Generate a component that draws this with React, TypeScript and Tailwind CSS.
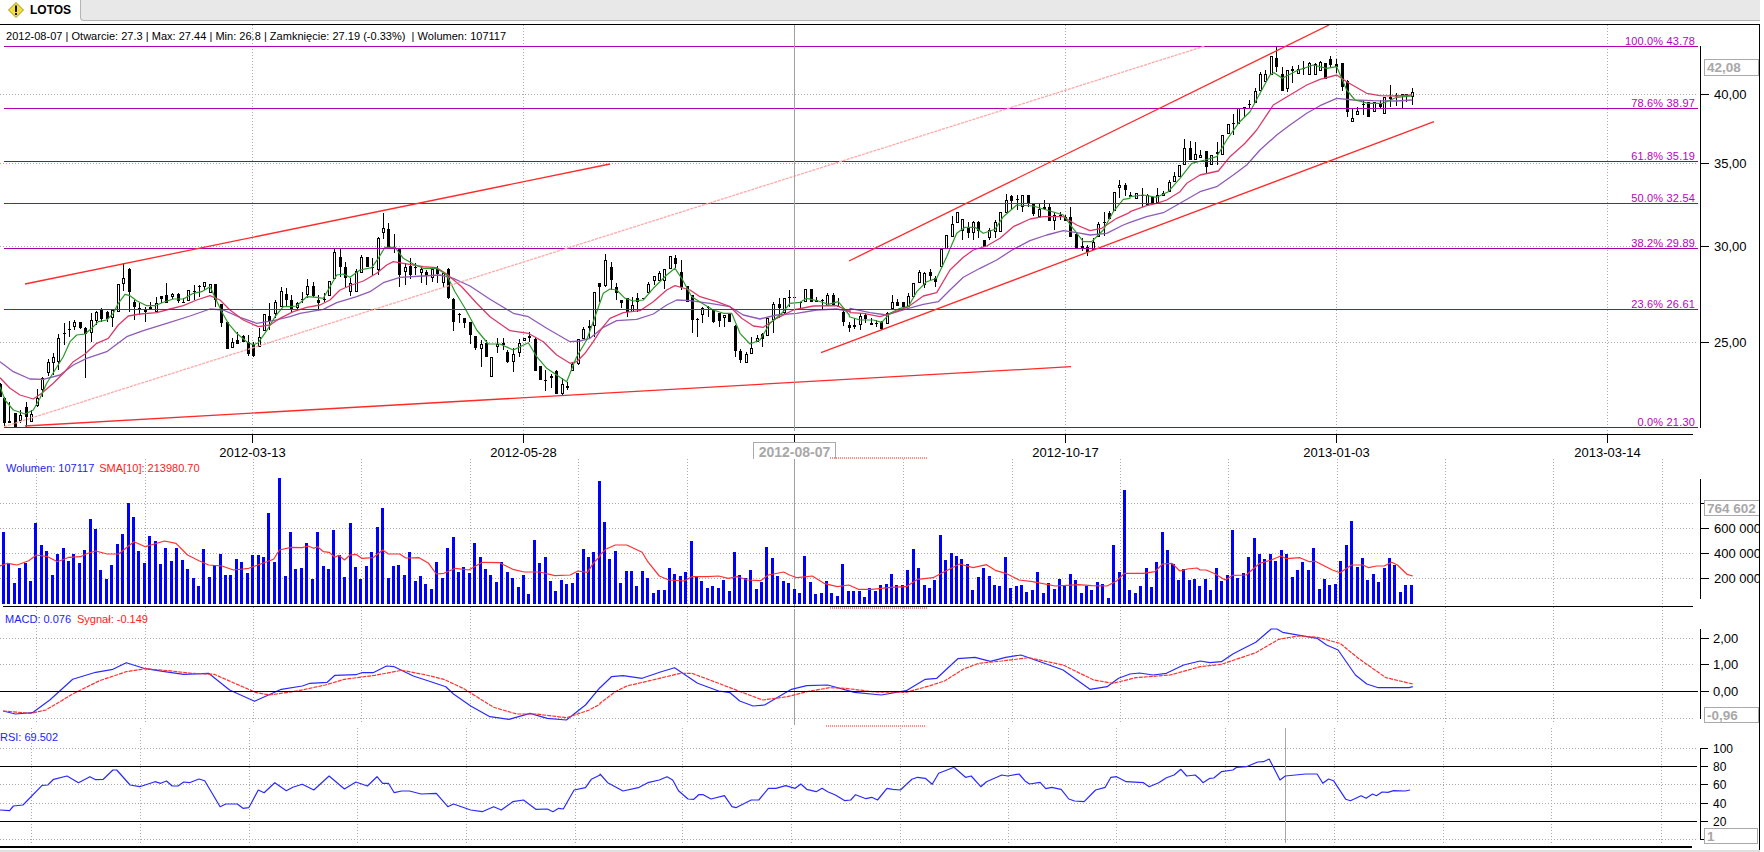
import React from 'react';

const seg = (cx: number, cy: number, sx: number, sy: number, s: string) =>
  s.trim().split(/\s+/).map((p) => {
    const [x, y] = p.split(',').map(Number);
    return `${(cx + x / sx).toFixed(1)},${(cy + y / sy).toFixed(1)}`;
  }).join(' ');

const Z = 2.613; // horizontal scale of the wide crops the points were read from

// hi, body top, body bottom, lo, filled - read from the crops, grouped per crop
type C = [number, number, number, number, number, number];
const candleParts: { cx: number; cy: number; d: C[] }[] = [
  { cx: 0, cy: 210, d: [
    [0,520,522,560,560,1],[13,562,565,640,650,1],[28,575,634,638,638,1],[45,608,608,650,650,1],[61,600,615,632,640,0],[78,575,590,620,650,1],
    [94,600,612,635,635,0],[110,538,565,587,590,0],[127,500,503,540,560,0],[143,448,455,490,498,0],[160,430,442,458,495,0],[175,372,385,455,480,0],
    [192,338,369,371,405,1],[208,333,357,361,380,1],[223,330,335,350,360,0],[241,335,337,355,358,1],[256,350,355,372,503,1],[274,310,331,368,395,0],
    [289,302,305,332,345,0],[304,295,300,327,335,1],[322,303,305,328,335,1],[337,297,300,325,352,0],[354,222,222,305,305,0],[370,160,205,223,243,0],
    [388,175,177,245,305,1],[403,270,277,290,330,1],[418,280,295,301,315,1],[436,290,300,305,335,1],[451,275,292,297,300,0],[469,262,280,305,307,0],
    [484,258,259,266,278,1],[499,220,256,280,280,1],[517,250,251,260,268,0],[533,250,251,272,280,1],[550,265,276,277,280,1],[565,240,241,272,272,0],
    [581,225,243,247,270,1],[598,226,227,231,260,1],[613,215,217,232,240,0],[631,222,222,248,248,0],[646,222,222,270,290,1],[664,282,283,338,350,1],
    [680,336,336,416,416,1],[695,385,397,414,414,0],[712,365,391,401,401,1],[728,375,377,396,396,1],[745,375,397,433,437,1],[760,397,405,438,440,1],
    [776,355,380,412,412,0],[793,313,313,362,362,0],[808,280,318,333,360,1],[826,270,277,312,325,0],[842,232,244,290,290,0],[859,235,252,270,290,1],
  ] },
  { cx: 280, cy: 200, d: [
    [34,285,300,326,340,1],[50,305,308,325,330,0],[67,275,296,298,310,1],[82,238,259,285,295,0],[100,245,259,287,290,1],[115,285,300,308,328,1],
    [132,278,296,297,305,1],[148,244,244,287,287,0],[163,148,156,238,238,0],[181,147,171,200,230,1],[196,185,201,233,260,1],[211,235,250,277,288,0],
    [229,208,214,276,276,0],[244,165,171,220,220,0],[262,171,171,201,201,1],[277,175,200,203,228,1],[295,112,114,210,225,0],[310,40,85,99,118,0],
    [325,70,88,140,140,1],[343,102,140,143,160,1],[358,145,147,225,260,1],[376,190,202,215,255,0],[391,175,198,224,238,1],[406,190,200,203,225,1],
    [424,200,208,218,250,0],[439,210,217,229,255,1],[457,200,208,235,245,0],[472,197,208,222,248,1],[488,220,220,248,260,0],[505,205,208,295,298,1],
    [520,295,296,365,392,1],[538,338,342,345,370,1],[553,355,355,370,385,1],[571,367,367,404,433,1],[586,408,408,445,450,1],[602,420,433,448,500,0],
    [619,420,430,472,472,1],[634,470,470,532,532,0],[652,415,433,442,460,0],[668,415,430,435,450,1],[682,450,455,485,490,1],[700,445,462,485,515,0],
    [716,418,430,458,470,0],[733,415,415,422,422,0],[748,397,408,413,425,1],[766,410,418,512,512,1],[781,497,497,541,541,1],[796,510,540,542,572,1],
    [814,522,528,534,565,1],[829,510,513,583,583,1],[847,535,552,581,585,0],[862,545,559,564,570,1],
  ] },
  { cx: 560, cy: 240, d: [
    [37,365,373,393,393,0],[54,298,298,373,375,0],[70,262,268,298,298,0],[88,240,258,265,295,0],[102,156,156,258,290,0],[118,130,130,140,185,1],
    [135,42,60,137,140,0],[152,65,80,120,150,1],[169,130,142,158,180,1],[184,180,180,188,205,1],[202,175,175,215,230,1],[217,170,195,215,215,0],
    [232,160,175,187,215,1],[248,175,175,178,178,1],[265,125,132,158,158,0],[282,107,107,122,135,0],[298,92,100,122,122,0],[313,88,88,122,148,0],
    [331,47,48,87,87,0],[346,45,55,72,85,1],[364,60,97,140,150,1],[380,138,138,185,185,1],[397,165,165,240,280,1],[412,235,238,241,290,1],
    [427,200,205,225,250,0],[445,198,200,203,232,1],[460,210,210,245,250,1],[478,220,220,242,262,1],[493,225,225,235,260,0],[508,220,220,245,245,1],
    [526,255,257,332,350,1],[541,328,333,360,368,1],[558,335,343,370,370,0],[574,290,323,343,343,0],[590,285,295,305,305,0],[606,280,281,298,320,1],
    [622,235,235,288,288,0],[639,185,193,240,280,0],[656,175,193,205,235,1],[672,175,175,220,225,0],[688,150,170,172,200,1],[703,170,170,175,175,1],
    [720,185,187,190,208,1],[736,148,148,185,185,0],[754,147,147,185,185,1],[769,170,180,187,187,1],[785,178,180,183,210,1],[802,160,165,198,198,0],
    [818,160,165,195,195,1],[834,175,197,200,200,1],
  ] },
  { cx: 840, cy: 170, d: [
    [10,415,425,455,468,1],[28,455,465,475,485,1],[43,445,466,470,478,1],[59,430,438,465,480,0],[76,430,435,447,458,1],[92,445,460,464,464,1],[108,450,458,460,472,1],
    [124,453,456,478,480,1],[140,425,428,462,462,0],[157,375,396,418,418,0],[172,388,396,408,408,1],[190,396,396,412,415,1],[205,370,378,412,412,0],
    [220,338,338,382,382,0],[238,300,305,338,338,0],[253,305,308,344,355,0],[271,298,305,317,330,1],[286,318,325,335,350,1],[304,236,236,290,290,0],
    [319,196,196,238,238,0],[335,138,162,200,200,0],[352,125,127,158,158,0],[367,148,148,182,210,0],[385,155,173,188,205,1],[400,152,156,188,210,0],
    [415,152,156,182,205,1],[433,210,210,230,232,1],[448,175,179,205,210,0],[466,150,157,185,205,0],[481,127,127,185,185,0],[497,72,90,128,128,0],
    [514,75,78,92,118,1],[530,75,87,91,120,1],[547,75,76,110,125,0],[563,75,75,100,112,1],[580,100,102,133,138,1],[596,100,118,140,140,0],
    [611,90,112,118,120,1],[628,100,112,152,152,1],[643,125,135,152,180,0],[660,125,135,138,150,1],[676,135,142,152,152,1],[691,112,142,202,202,1],
    [709,190,192,238,238,1],[725,205,228,238,242,1],[742,225,230,246,258,1],[758,205,215,240,240,0],[775,155,163,200,200,0],[791,125,155,158,198,1],
    [806,122,130,147,147,1],[822,65,65,122,122,0],[838,30,45,55,85,0],[856,40,45,60,78,1],
  ] },
  { cx: 1120, cy: 40, d: [
    [15,435,436,450,465,1],[31,455,465,470,470,1],[47,460,460,478,478,0],[65,445,465,468,500,1],[81,462,465,495,498,0],[97,470,470,490,495,1],
    [112,445,465,488,488,0],[128,452,458,468,468,0],[146,420,427,455,455,0],[161,395,408,425,425,0],[177,375,375,412,412,0],[193,298,323,375,375,0],
    [211,302,323,360,360,1],[226,305,342,360,360,0],[241,330,344,355,355,0],[259,334,334,380,403,1],[274,345,346,375,375,0],[292,305,336,342,375,1],
    [307,285,285,346,346,0],[323,252,252,283,283,0],[340,222,250,253,285,1],[355,205,205,253,253,0],[373,200,202,204,230,1],[388,180,192,194,207,1],
    [406,145,153,188,188,0],[421,95,102,153,153,0],[436,90,102,127,127,0],[454,48,48,105,105,0],[469,20,55,82,95,1],[487,82,102,152,152,1],
    [502,90,90,148,155,0],[517,78,88,92,130,1],[535,75,88,103,103,0],[550,62,85,88,105,1],[568,65,70,105,105,0],[584,68,73,105,105,0],
    [599,62,67,92,92,0],[616,68,68,118,118,1],[631,48,58,75,80,1],[649,58,72,80,100,1],[665,70,70,140,153,1],[681,120,122,215,230,1],
    [697,205,235,245,245,0],[712,200,214,225,225,0],[730,180,192,195,225,1],[745,185,187,230,230,1],[763,186,186,216,216,0],[779,180,192,200,205,1],
    [793,170,172,222,222,0],[811,135,172,178,200,1],[827,158,164,168,198,1],[845,163,163,167,205,1],[859,162,163,168,185,1],[877,145,155,172,195,0],
  ] },
];

const candles = candleParts.flatMap(({ cx, cy, d }) =>
  d.map(([x, hi, top, bot, lo, f]) => ({
    x: Math.round(cx + x / 3) + 0.5,
    hi: Math.round(cy + hi / 3),
    top: Math.round(cy + top / 3),
    bot: Math.round(cy + bot / 3),
    lo: Math.round(cy + lo / 3),
    f,
  }))
);

const maGreen = [
  seg(0, 210, 3, 3, '0,530 15,570 40,600 75,612 100,600 120,565 140,520 165,480 190,440 210,395 230,375 255,372 275,355 295,335 320,330 340,310 355,280 375,253 390,257 410,272 440,287 465,287 490,277 520,267 550,267 580,250 605,245 630,230 645,262 665,305 685,340 710,370 740,395 760,405 775,398 800,362 825,320 850,290 870,290'),
  seg(280, 200, 3, 3, '50,318 80,290 110,292 130,295 150,260 170,225 190,222 210,232 240,210 275,203 295,175 315,142 345,142 370,175 400,192 430,205 470,205 500,225 525,275 555,325 590,390 625,432 660,432 700,450 745,428 770,470 800,505 830,525 860,545'),
  seg(560, 240, 3, 3, '40,375 50,350 80,300 105,230 130,160 150,147 170,150 195,175 220,183 250,180 280,145 320,105 345,85 365,115 395,170 430,192 460,210 490,220 515,220 540,280 570,312 600,300 630,250 665,220 690,190 720,187 740,175 775,183 805,193 835,185 868,225'),
  seg(840, 170, 3, 3, '28,440 60,450 100,450 125,457 150,430 180,415 205,410 230,365 260,335 290,325 320,260 350,190 375,172 405,172 430,190 465,178 490,140 530,105 580,108 620,120 670,135 695,170 730,215 755,215 790,180 820,125 850,88 870,85'),
  seg(1120, 40, 3, 3, '30,470 70,465 110,472 145,455 180,415 215,370 255,360 290,350 320,300 355,250 390,215 420,160 450,105 462,98 487,115 530,92 580,75 620,85 650,80 680,150 705,180 745,190 790,190 830,172 877,168'),
].join(' ');

const maRed = [
  seg(0, 210, 3, 3, '0,503 30,535 60,555 100,567 125,550 160,520 190,490 220,455 255,432 290,400 325,385 355,345 385,318 420,312 470,308 510,297 550,287 590,270 630,257 660,270 690,300 730,330 775,350 810,345 840,325'),
  seg(280, 200, 3, 3, '40,335 80,322 120,315 150,300 180,270 215,255 250,243 290,220 320,195 340,185 370,190 430,200 470,203 500,222 545,260 590,310 630,350 690,392 745,400 790,425 830,465 870,490'),
  seg(560, 240, 3, 3, '30,370 50,365 75,340 100,305 125,265 150,235 190,218 240,212 280,185 320,150 345,137 390,150 420,170 470,185 510,200 545,235 580,258 610,262 650,235 700,210 760,198 830,197 870,215'),
  seg(840, 170, 3, 3, '30,428 70,430 120,440 160,428 205,410 250,378 290,368 330,300 370,262 400,240 440,228 480,205 520,170 570,147 610,140 670,140 710,165 750,182 785,175 830,145 870,127'),
  seg(1120, 40, 3, 3, '30,515 80,497 110,490 140,480 180,455 200,430 240,405 295,393 330,350 375,310 410,270 460,195 510,165 560,135 600,118 650,105 680,125 740,160 780,167 830,168 877,165'),
].join(' ');

const maPurple = [
  seg(0, 210, 3, 3, '0,455 40,485 90,507 130,508 180,495 220,465 260,445 320,425 380,380 430,362 500,340 570,318 630,297 670,300 720,322 770,340 820,332 870,320'),
  seg(280, 200, 3, 3, '60,340 130,328 170,308 230,290 270,275 310,248 360,232 430,228 480,225 520,235 570,258 630,298 700,340 745,350 800,385 870,425'),
  seg(560, 240, 3, 3, '30,305 60,303 90,295 130,262 170,242 230,238 280,222 320,195 350,180 390,182 450,190 510,200 550,225 600,237 650,225 710,220 770,210 830,207 870,215'),
  seg(840, 170, 3, 3, '30,415 90,428 140,435 205,415 250,403 295,395 330,360 370,322 420,295 470,270 520,238 570,212 620,195 670,182 710,188 750,195 800,190 850,165 870,157'),
  seg(1120, 40, 3, 3, '30,547 80,530 130,518 180,490 240,455 290,440 340,405 380,375 420,330 470,285 510,255 560,220 600,197 650,175 700,180 760,182 830,183 877,180'),
].join(' ');

const volTops1 = [306,400,459,414,399,453,279,345,363,435,372,354,393,372,399,360,267,297,420,447,405,342,312,219,261,363,399,318,333,402,354,393,354,390,417,444,468,357,441,405,372,435,435,387,396,429,375,375,381,249,396,144,438,306,417,414,339,447,306,408,417,300,375,441,279,411,447,408,366,291,234,444,408,405,435,366,453,438,462,477,396,444,354,321,426,411,429,339,381,417,435,456,396,426,444,471,435,492,330,399,381,453,483,450,462,459,429,357,381,366,153];
const volTops2 = [66,177,153,249,213,213,258,213,234,279,270,270,204,222,228,216,123,231,243,264,258,264,240,273,156,225,234,210,267,246,141,174,228,243,249,267,279,168,246,282,279,243,279,288,192,273,273,273,291,264,273,255,252,222,255,255,210,147,204,255,264,240,105,180,159,168,177,192,270,231,204,228,255,258,171,264,258,255,276,270,216,279,249,267,237,258,222,240,279,258,270,246,252,294,135,216,-30,270,279,258,204,261,186,96,150,192];
const volTops3 = [360,402,450,417,450,447,468,447,480,414,453,435,300,444,429,381,324,372,387,372,393,360,372,441,420,396,420,354,477,447,465,462,393,345,273,411,384,450,432,456,414,384,405,486,465,465];

const STEP = 5.416;
const volBars = [
  ...volTops1.map((t, i) => ({ x: 2 + i * STEP, y: 430 + t / 3 })),
  ...volTops2.map((t, i) => ({ x: 603 + i * STEP, y: 500 + t / 3 })),
  ...volTops3.map((t, i) => ({ x: 1166 + i * STEP, y: 430 + t / 3 })),
];

const volSma = [
  seg(0, 430, Z, 3, '0,408 20,400 45,405 75,392 95,375 125,380 150,395 180,382 210,380 230,370 250,363 280,372 310,372 350,335 380,350 430,333 460,340 490,375 520,392 545,405 580,408 610,420 650,415 690,398 715,388 730,360 760,352 790,353 805,348 820,355 830,350 845,365 860,367 875,382 885,376 900,390 915,375 930,373 945,385 975,383 1000,360 1015,372 1045,372 1060,384 1095,383 1120,400 1140,432 1160,430 1190,415 1225,420 1260,397 1305,398 1340,418 1370,426 1410,426 1450,437 1490,435 1510,423 1535,427 1550,400 1568,378'),
  seg(600, 500, Z, 3, '0,165 15,148 40,135 70,135 110,157 125,185 155,228 180,240 220,243 240,230 280,230 310,228 335,235 360,230 385,240 420,242 440,225 480,216 495,225 515,233 555,228 585,250 620,260 650,255 675,268 710,268 760,262 800,260 830,238 870,233 900,215 940,192 975,203 1010,194 1035,212 1060,220 1095,240 1130,245 1190,258 1250,254 1285,257 1325,258 1350,243 1370,220 1420,220 1450,215 1470,192 1495,190 1515,213 1535,207 1560,204 1568,210'),
  seg(1164, 430, Z, 3, '110,420 130,430 160,450 180,436 215,435 250,400 280,390 305,378 320,386 355,383 380,395 395,394 440,420 460,428 490,405 520,405 535,413 555,408 575,408 595,397 610,405 635,433 650,438'),
].join(' ');

const macdBlue = [
  seg(0, 430, Z, 3, '8,843 40,852 85,848 130,810 190,748 250,727 295,718 330,698 380,716 430,725 480,733 545,730 600,780 665,814 735,778 790,768 810,760 855,757 875,736 930,734 945,728 975,728 1010,708 1030,710 1080,738 1120,753 1165,770 1185,792 1230,828 1280,860 1330,868 1385,850 1430,865 1480,870 1530,825 1568,772'),
  seg(600, 500, Z, 3, '0,563 30,530 60,527 110,535 160,515 195,503 255,550 310,573 340,578 365,603 400,618 430,615 500,568 540,557 595,555 665,577 735,585 800,572 850,538 880,535 935,476 980,472 1020,484 1060,472 1100,465 1150,485 1210,510 1280,568 1325,560 1355,535 1385,522 1410,519 1445,525 1480,520 1525,495 1568,483'),
  seg(1164, 430, Z, 3, '120,698 150,695 180,672 200,660 240,637 280,597 295,597 310,607 400,625 425,645 455,660 500,735 530,762 560,773 640,773 650,770'),
].join(' ');

const macdRed = [
  seg(0, 430, Z, 3, '8,843 80,850 120,840 190,792 260,752 330,725 380,716 440,722 500,730 560,733 610,758 670,788 705,795 780,782 850,765 900,748 980,736 1050,721 1110,734 1160,748 1210,775 1290,832 1350,852 1400,852 1480,863 1540,840 1568,822'),
  seg(600, 500, Z, 3, '0,610 40,575 70,558 130,542 210,520 240,520 310,550 360,572 425,600 490,590 540,575 600,563 640,565 720,576 800,577 860,558 900,543 950,507 990,490 1050,483 1120,473 1210,495 1290,540 1340,550 1400,533 1490,525 1568,500'),
  seg(1164, 430, Z, 3, '150,703 240,668 300,628 350,618 400,622 460,640 510,687 580,743 650,762'),
].join(' ');

const rsiLine = [
  seg(0, 430, Z, 3, '0,1140 25,1142 35,1128 60,1125 110,1066 125,1065 140,1048 175,1038 205,1058 235,1040 250,1049 270,1048 295,1020 305,1020 340,1065 365,1070 405,1055 420,1060 435,1053 450,1068 465,1068 480,1056 495,1058 520,1047 535,1052 575,1130 590,1122 620,1122 635,1135 650,1133 675,1080 690,1088 718,1058 748,1082 765,1072 790,1063 820,1080 860,1038 900,1077 930,1056 960,1068 985,1040 1000,1060 1015,1060 1030,1088 1050,1083 1070,1083 1100,1092 1140,1090 1170,1130 1185,1122 1230,1140 1260,1145 1290,1130 1310,1140 1340,1115 1368,1110 1400,1138 1430,1137 1445,1145 1460,1135 1472,1137 1500,1080 1530,1073 1545,1048 1568,1035'),
  seg(600, 500, Z, 3, '0,822 20,848 60,873 100,863 125,848 155,840 175,830 190,840 205,872 230,897 245,898 258,884 270,884 290,897 325,887 345,920 355,923 395,900 415,900 440,865 460,865 485,857 510,865 525,852 540,868 565,875 580,865 595,875 615,885 640,902 655,900 668,884 695,896 710,892 725,900 750,865 765,868 785,870 815,838 830,832 850,835 868,853 885,820 925,802 955,832 970,828 995,860 1010,845 1050,825 1065,828 1095,822 1110,842 1122,852 1150,847 1165,866 1180,862 1205,868 1225,897 1240,903 1265,905 1295,870 1320,862 1335,832 1350,830 1375,845 1420,848 1435,860 1460,848 1480,833 1500,825 1518,808 1533,828 1555,825 1568,838'),
  seg(1164, 430, Z, 3, '102,1058 120,1045 130,1044 150,1025 180,1020 190,1012 215,1010 245,996 260,995 275,987 303,1050 317,1038 370,1032 400,1032 415,1060 430,1047 443,1052 475,1108 487,1112 515,1097 528,1105 545,1092 555,1097 570,1086 585,1087 600,1082 630,1083 643,1080'),
].join(' ');

const fibs = [
  { y: 46.5, ty: 41, label: '100.0% 43.78', c: '#b000b0' },
  { y: 108.5, ty: 103, label: '78.6% 38.97', c: '#b000b0' },
  { y: 161.5, ty: 156, label: '61.8% 35.19', c: '#900090' },
  { y: 203.5, ty: 198, label: '50.0% 32.54', c: '#a000a0' },
  { y: 248.5, ty: 243, label: '38.2% 29.89', c: '#a800a8' },
  { y: 309.5, ty: 304, label: '23.6% 26.61', c: '#a000a0' },
  { y: 427.5, ty: 422, label: '0.0% 21.30', c: '#900090' },
];

const priceTicks = [
  { y: 94.5, label: '40,00' },
  { y: 163.5, label: '35,00' },
  { y: 246.5, label: '30,00' },
  { y: 342.5, label: '25,00' },
];

const dateTicks = [
  { x: 252.5, label: '2012-03-13' },
  { x: 523.5, label: '2012-05-28' },
  { x: 794.5, label: '' },
  { x: 1065.5, label: '2012-10-17' },
  { x: 1336.5, label: '2013-01-03' },
  { x: 1607.5, label: '2013-03-14' },
];

const lowerGridX = [36, 145, 253, 361, 470, 578, 687, 794, 903, 1012, 1120, 1228, 1337, 1445, 1553, 1662];
const rsiGridX = [31, 140, 249, 357, 466, 575, 682, 791, 900, 1008, 1116, 1225, 1334, 1443, 1551, 1661];

const HDots = ({ y, x2 = 1698 }: { y: number; x2?: number }) => (
  <line x1={0} x2={x2} y1={y} y2={y} stroke="#ababab" strokeDasharray="1 2" shapeRendering="crispEdges" />
);
const VDots = ({ x, y1, y2 }: { x: number; y1: number; y2: number }) => (
  <line x1={x + 0.5} x2={x + 0.5} y1={y1} y2={y2} stroke="#ababab" strokeDasharray="1 2" shapeRendering="crispEdges" />
);
const Flat = ({ y, x1 = 0, x2, c = '#000', w = 1 }: { y: number; x1?: number; x2: number; c?: string; w?: number }) => (
  <line x1={x1} x2={x2} y1={y} y2={y} stroke={c} strokeWidth={w} shapeRendering="crispEdges" />
);
const Tall = ({ x, y1, y2, c = '#000' }: { x: number; y1: number; y2: number; c?: string }) => (
  <line x1={x} x2={x} y1={y1} y2={y2} stroke={c} shapeRendering="crispEdges" />
);
const Line = ({ d, c, w = 1.2 }: { d: string; c: string; w?: number }) => (
  <polyline points={d} fill="none" stroke={c} strokeWidth={w} strokeLinejoin="round" />
);
const Trend = ({ a, b, pale }: { a: [number, number]; b: [number, number]; pale?: boolean }) => (
  <line x1={a[0]} y1={a[1]} x2={b[0]} y2={b[1]} stroke={pale ? '#ffa8a8' : '#ff2a2a'} strokeWidth={1.3} strokeDasharray={pale ? '3 1' : undefined} />
);
const AxisLabel = ({ x, y, t, small }: { x: number; y: number; t: string; small?: boolean }) => (
  <text x={x} y={y} dominantBaseline="central" className={small ? 'fill-black text-[12px]' : 'fill-black text-[13px]'}>{t}</text>
);
// gray value box on the right axis
const ValueBox = ({ x, y, w, h, t }: { x: number; y: number; w: number; h: number; t: string }) => (
  <g>
    <rect x={x + 0.5} y={y + 0.5} width={w} height={h} fill="#fff" stroke="#aaaaaa" shapeRendering="crispEdges" />
    <text x={x + 3} y={y + h / 2 + 0.5} dominantBaseline="central" className="fill-[#a8a8a8] text-[13.5px] font-bold">{t}</text>
  </g>
);
const PinkDots = ({ x1, x2, y }: { x1: number; x2: number; y: number }) => (
  <line x1={x1} x2={x2} y1={y} y2={y} stroke="#ff8c8c" strokeWidth={1.5} strokeDasharray="1 1" shapeRendering="crispEdges" />
);

const MainChart = () => (
  <div className="relative h-[434px] shrink-0">
    <svg width={1764} height={434} viewBox="0 25 1764 434" className="block">
      {dateTicks.map((d) => (d.label ? <VDots key={d.x} x={d.x - 0.5} y1={25} y2={434} /> : null))}
      {priceTicks.map((p) => <HDots key={p.y} y={p.y} />)}

      {candles.map((c, i) => (
        <g key={i} shapeRendering="crispEdges">
          <line x1={c.x} x2={c.x} y1={c.hi} y2={c.lo} stroke="#000" />
          {c.f ? (
            <rect x={c.x - 1.5} y={c.top} width={3} height={Math.max(c.bot - c.top, 1)} fill="#000" />
          ) : (
            <rect x={c.x - 1} y={c.top + 0.5} width={2} height={Math.max(c.bot - c.top - 1, 1)} fill="#fff" stroke="#000" />
          )}
        </g>
      ))}

      <Line d={maPurple} c="#8f5ab8" w={1.3} />
      <Line d={maRed} c="#dc3a68" w={1.3} />
      <Line d={maGreen} c="#2a9a2a" w={1.2} />

      {fibs.map((f) => (
        <g key={f.y}>
          <Flat y={f.y} x1={4} x2={1698} c={f.c} />
          <text x={1695} y={f.ty} textAnchor="end" dominantBaseline="central" className="fill-[#bb00bb] text-[11px] tracking-[0.18px]">{f.label}</text>
        </g>
      ))}

      <Trend a={[4, 426.7]} b={[1205, 46]} pale />
      <Trend a={[25, 284]} b={[610, 164]} />
      <Trend a={[25, 426]} b={[1071, 366.7]} />
      <Trend a={[821, 352.7]} b={[1434, 121.7]} />
      <Trend a={[849, 261]} b={[1329, 25]} />

      <Tall x={794.5} y1={25} y2={431} c="#a0a0a0" />

      <Flat y={434.5} x2={1693} />
      {dateTicks.map((d) => (
        <g key={d.x}>
          <Tall x={d.x} y1={434} y2={443} />
          {d.label && <text x={d.x} y={452.5} textAnchor="middle" dominantBaseline="central" className="fill-black text-[13px]">{d.label}</text>}
        </g>
      ))}
      <rect x={753.5} y={442.5} width={82} height={20} fill="#fff" stroke="#aaaaaa" shapeRendering="crispEdges" />
      <text x={794.5} y={451.5} textAnchor="middle" dominantBaseline="central" className="fill-[#a8a8a8] text-[14px] font-bold">2012-08-07</text>
      <PinkDots x1={830} x2={928} y={458} />

      <Tall x={1700.5} y1={46} y2={428} />
      {priceTicks.map((p) => (
        <g key={p.y}>
          <Flat y={p.y} x1={1701} x2={1709} />
          <AxisLabel x={1714} y={p.y} t={p.label} />
        </g>
      ))}
      <ValueBox x={1704} y={59} w={54} h={16} t="42,08" />
    </svg>
    <div className="absolute left-[6px] top-[4px] whitespace-pre text-[11px] leading-[14px] tracking-[0.02px] text-black">
      2012-08-07 | Otwarcie: 27.3 | Max: 27.44 | Min: 26.8 | Zamknięcie: 27.19 (-0.33%)  | Wolumen: 107117
    </div>
  </div>
);

const VolumeChart = () => (
  <div className="relative h-[148px] shrink-0">
    <svg width={1764} height={148} viewBox="0 459 1764 148" className="block">
      {lowerGridX.map((x) => <VDots key={x} x={x} y1={459} y2={606} />)}
      {[503.5, 528.5, 553.5, 578.5].map((y) => <HDots key={y} y={y} x2={1693} />)}
      <Tall x={794.5} y1={459} y2={606} c="#a0a0a0" />
      {volBars.map((b, i) => (
        <rect key={i} x={Math.round(b.x)} y={Math.round(b.y)} width={3} height={604 - Math.round(b.y)} fill="#0000ff" shapeRendering="crispEdges" />
      ))}
      <Line d={volSma} c="#ff3030" />
      <Flat y={606.5} x1={3} x2={1693} />
      <Tall x={1700.5} y1={479} y2={599} />
      {[
        { y: 528.5, t: '600 000' },
        { y: 553.5, t: '400 000' },
        { y: 578.5, t: '200 000' },
      ].map((a) => (
        <g key={a.y}>
          <Flat y={a.y} x1={1701} x2={1709} />
          <AxisLabel x={1714} y={a.y} t={a.t} />
        </g>
      ))}
      <Flat y={503.5} x1={1701} x2={1704} />
      <ValueBox x={1704} y={500} w={56} h={15} t="764 602" />
    </svg>
    <div className="absolute left-[6px] top-[2px] flex gap-[5px] text-[11px] leading-[14px]">
      <span className="text-[#1c1cff]">Wolumen: 107117</span>
      <span className="text-[#ff2020]">SMA[10]: 213980.70</span>
    </div>
  </div>
);

const MacdChart = () => (
  <div className="relative h-[120px] shrink-0">
    <svg width={1764} height={120} viewBox="0 607 1764 120" className="block">
      {lowerGridX.map((x) => <VDots key={x} x={x} y1={607} y2={723} />)}
      {[638.5, 664.5, 718.5].map((y) => <HDots key={y} y={y} x2={1693} />)}
      <Tall x={794.5} y1={609} y2={725} c="#a0a0a0" />
      <Line d={macdBlue} c="#2a2aff" />
      <polyline points={macdRed} fill="none" stroke="#ff3030" strokeWidth={1.2} strokeDasharray="4 1" />
      <Flat y={691.5} x2={1698} />
      <PinkDots x1={830} x2={928} y={608} />
      <PinkDots x1={826} x2={925} y={726} />
      <Tall x={1700.5} y1={629} y2={719} />
      {[
        { y: 638.5, t: '2,00' },
        { y: 664.5, t: '1,00' },
        { y: 691.5, t: '0,00' },
      ].map((a) => (
        <g key={a.y}>
          <Flat y={a.y} x1={1701} x2={1709} />
          <AxisLabel x={1713} y={a.y} t={a.t} />
        </g>
      ))}
      <ValueBox x={1704} y={707} w={54} h={15} t="-0,96" />
    </svg>
    <div className="absolute left-[5px] top-[5px] flex gap-[6px] text-[11px] leading-[14px]">
      <span className="text-[#1c1cff]">MACD: 0.076</span>
      <span className="text-[#ff2020]">Sygnał: -0.149</span>
    </div>
  </div>
);

const RsiChart = () => (
  <div className="relative h-[123px] shrink-0">
    <svg width={1764} height={123} viewBox="0 727 1764 123" className="block">
      {rsiGridX.map((x) => <VDots key={x} x={x} y1={728} y2={843} />)}
      {[748.5, 784.5, 803.5, 839.5].map((y) => <HDots key={y} y={y} x2={1697} />)}
      <Flat y={766.5} x2={1697} />
      <Flat y={821.5} x2={1697} />
      <Tall x={1285.5} y1={728} y2={843} c="#a8a8a8" />
      <Line d={rsiLine} c="#2a2aff" />
      <Tall x={1700.5} y1={748} y2={840} />
      {[
        { y: 748.5, t: '100' },
        { y: 766.5, t: '80' },
        { y: 784.5, t: '60' },
        { y: 803.5, t: '40' },
        { y: 821.5, t: '20' },
      ].map((a) => (
        <g key={a.y}>
          <Flat y={a.y} x1={1701} x2={1708} />
          <AxisLabel x={1713} y={a.y} t={a.t} small />
        </g>
      ))}
      <Flat y={839.5} x1={1701} x2={1704} />
      <ValueBox x={1704} y={828} w={53} h={15} t="1" />
      <Flat y={847} x2={1692} w={2} />
    </svg>
    <div className="absolute left-0 top-[3px] text-[11px] leading-[14px] text-[#1c1cff]">RSI: 69.502</div>
  </div>
);

const App: React.FC = () => {
  return (
    <div className="h-[852px] w-[1764px] overflow-hidden bg-white font-['Liberation_Sans',sans-serif]">
      <div className="flex h-full w-[1760px] flex-col overflow-hidden">
        {/* tab strip */}
        <div className="flex h-[25px] shrink-0 items-start border-b border-black bg-white">
          <div className="flex h-[20px] w-[80px] items-center pl-[8px]">
            <svg width="16" height="16" viewBox="0 0 16 16">
              <polygon points="8,0.5 15.5,8 8,15.5 0.5,8" fill="#f4dd3e" stroke="#a39322" strokeLinejoin="round" />
              <rect x="7" y="3.5" width="2" height="6.5" fill="#111" />
              <rect x="7" y="11" width="2" height="2" fill="#111" />
            </svg>
            <span className="ml-[6px] text-[12px] font-bold text-black">LOTOS</span>
          </div>
          <div className="h-[21px] flex-1 rounded-bl-[4px] border-b border-l border-[#b4b4b4] bg-[#e8e8e8]" />
        </div>

        <div className="flex flex-1 flex-col overflow-hidden border-r border-black">
          <MainChart />
          <VolumeChart />
          <MacdChart />
          <RsiChart />
        </div>
        <div className="h-[2px] shrink-0 bg-[#e0e0e0]" />
      </div>
    </div>
  );
};

export default App;
